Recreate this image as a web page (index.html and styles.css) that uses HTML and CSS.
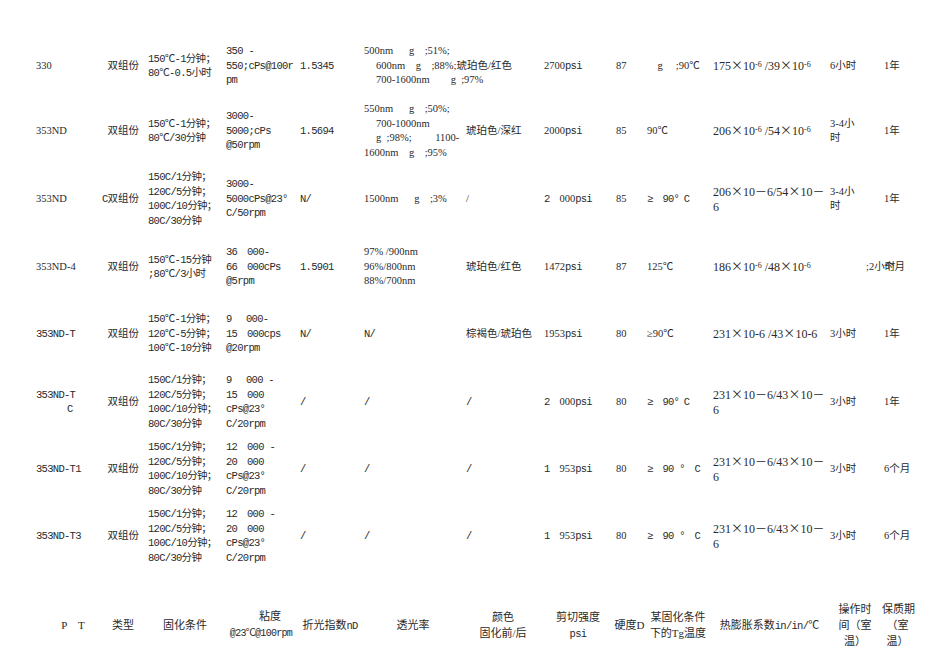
FILE: index.html
```html
<!DOCTYPE html>
<html lang="zh-CN">
<head>
<meta charset="utf-8">
<title>双组份胶粘剂参数表</title>
<link rel="stylesheet" href="styles.css">
</head>
<body>
<table class="sheet">
<colgroup>
<col class="w1"><col class="w2"><col class="w3"><col class="w4"><col class="w5"><col class="w6"><col class="w7"><col class="w8"><col class="w9"><col class="w10"><col class="w11"><col class="w12"><col class="w13">
</colgroup>
<tbody>
<tr class="r1">
<td>330</td>
<td class="ty">双组份</td>
<td class="m">150℃-1分钟；<br>80℃-0.5小时</td>
<td class="m">350 -<br>550;cPs@100r<br>pm</td>
<td class="m">1.5345</td>
<td>500nm　&ensp;g　;51%;<br><span class="ind">600nm　g　;88%;琥珀色/红色</span><br><span class="ind">700-1600nm　　g&ensp;;97%</span></td>
<td></td>
<td>2700<span class="m">psi</span></td>
<td>87</td>
<td>　g　 ;90℃</td>
<td class="tx">175<span class="x">×</span>10<sup class="sp">-6</sup> /39<span class="x">×</span>10<sup class="sp">-6</sup></td>
<td>6小时</td>
<td>1年</td>
</tr>
<tr class="r2">
<td>353ND</td>
<td class="ty">双组份</td>
<td class="m">150℃-1分钟；<br>80℃/30分钟</td>
<td class="m">3000-<br>5000;cPs<br>@50rpm</td>
<td class="m">1.5694</td>
<td>550nm　&ensp;g　;50%;<br><span class="ind">700-1000nm</span><br><span class="ind">g&ensp;;98%;　　 1100-</span><br>1600nm　g　;95%</td>
<td>琥珀色/深红</td>
<td>2000<span class="m">psi</span></td>
<td>85</td>
<td>90℃</td>
<td class="tx">206<span class="x">×</span>10<sup class="sp">-6</sup> /54<span class="x">×</span>10<sup class="sp">-6</sup></td>
<td>3-4小<br>时</td>
<td>1年</td>
</tr>
<tr class="r3">
<td>353ND</td>
<td class="ty"><span class="m">C</span>双组份</td>
<td class="m">150C/1分钟；<br>120C/5分钟；<br>100C/10分钟；<br>80C/30分钟</td>
<td class="m">3000-<br>5000cPs@23°<br>C/50rpm</td>
<td class="m">N/</td>
<td>1500nm　&ensp;g　;3%</td>
<td>/</td>
<td><span class="m">2　</span>000<span class="m">psi</span></td>
<td>85</td>
<td class="m">≥　90°&ensp;C</td>
<td class="tx">206<span class="x">×</span>10<span class="x">－</span>6/54<span class="x">×</span>10<span class="x">－</span><br>6</td>
<td>3-4小<br>时</td>
<td>1年</td>
</tr>
<tr class="r4">
<td>353ND-4</td>
<td class="ty">双组份</td>
<td class="m">150℃-15分钟<br>;80℃/3小时</td>
<td class="m">36　000-<br>66　000cPs<br>@5rpm</td>
<td class="m">1.5901</td>
<td>97% /900nm<br>96%/800nm<br>88%/700nm</td>
<td>琥珀色/红色</td>
<td>1472<span class="m">psi</span></td>
<td>87</td>
<td>125℃</td>
<td class="tx">186<span class="x">×</span>10<sup class="sp">-6</sup> /48<span class="x">×</span>10<sup class="sp">-6</sup></td>
<td class="late">;2小时</td>
<td>个月</td>
</tr>
<tr class="r5">
<td class="m">353ND-T</td>
<td class="ty">双组份</td>
<td class="m">150℃-1分钟；<br>120℃-5分钟；<br>100℃-10分钟</td>
<td class="m">9　&ensp;000-<br>15　000cps<br>@20rpm</td>
<td class="m">N/</td>
<td class="m">N/</td>
<td>棕褐色/琥珀色</td>
<td>1953<span class="m">psi</span></td>
<td>80</td>
<td>≥90℃</td>
<td class="tx">231<span class="x">×</span>10-6 /43<span class="x">×</span>10-6</td>
<td>3小时</td>
<td>1年</td>
</tr>
<tr class="r6">
<td class="m">353ND-T<br><span class="tail">C</span></td>
<td class="ty">双组份</td>
<td class="m">150C/1分钟；<br>120C/5分钟；<br>100C/10分钟；<br>80C/30分钟</td>
<td class="m">9　&ensp;000 -<br>15　000<br>cPs@23°<br>C/20rpm</td>
<td class="m">/</td>
<td class="m">/</td>
<td class="m">/</td>
<td><span class="m">2　</span>000<span class="m">psi</span></td>
<td>80</td>
<td class="m">≥　90°&ensp;C</td>
<td class="tx">231<span class="x">×</span>10<span class="x">－</span>6/43<span class="x">×</span>10<span class="x">－</span><br>6</td>
<td>3小时</td>
<td>1年</td>
</tr>
<tr class="r7">
<td class="m">353ND-T1</td>
<td class="ty">双组份</td>
<td class="m">150C/1分钟；<br>120C/5分钟；<br>100C/10分钟；<br>80C/30分钟</td>
<td class="m">12　000 -<br>20　000<br>cPs@23°<br>C/20rpm</td>
<td class="m">/</td>
<td class="m">/</td>
<td class="m">/</td>
<td><span class="m">1　</span>953<span class="m">psi</span></td>
<td>80</td>
<td class="m">≥　90 °　C</td>
<td class="tx">231<span class="x">×</span>10<span class="x">－</span>6/43<span class="x">×</span>10<span class="x">－</span><br>6</td>
<td>3小时</td>
<td>6个月</td>
</tr>
<tr class="r8">
<td class="m">353ND-T3</td>
<td class="ty">双组份</td>
<td class="m">150C/1分钟；<br>120C/5分钟；<br>100C/10分钟；<br>80C/30分钟</td>
<td class="m">12　000 -<br>20　000<br>cPs@23°<br>C/20rpm</td>
<td class="m">/</td>
<td class="m">/</td>
<td class="m">/</td>
<td><span class="m">1　</span>953<span class="m">psi</span></td>
<td>80</td>
<td class="m">≥　90 °　C</td>
<td class="tx">231<span class="x">×</span>10<span class="x">－</span>6/43<span class="x">×</span>10<span class="x">－</span><br>6</td>
<td>3小时</td>
<td>6个月</td>
</tr>
<tr class="hd">
<td class="h1">P　T</td>
<td>类型</td>
<td>固化条件</td>
<td><span class="visc">粘度</span><br><span class="m vs">@23℃@100rpm</span></td>
<td>折光指数<span class="m">nD</span></td>
<td>透光率</td>
<td>颜色<br>固化前/后</td>
<td>剪切强度<br><span class="m">psi</span></td>
<td>硬度D</td>
<td>某固化条件<br>下的Tg温度</td>
<td>热膨胀系数<span class="m">in/in/</span>℃</td>
<td>操作时<br>间（室<br>温）</td>
<td class="h13">保质期<br>（室<br>温）</td>
</tr>
</tbody>
</table>
</body>
</html>
```

FILE: styles.css
```css
html, body {
  margin: 0;
  padding: 0;
  background: #ffffff;
}

body {
  color: #2a2a2a;
  font-family: "Liberation Serif", "Noto Sans CJK SC", serif;
  font-size: 10.5px;
}

.sheet {
  table-layout: fixed;
  border-collapse: collapse;
  width: 901px;
  margin: 34px 0 0 34px;
}

.w1 { width: 66px; }
.w2 { width: 46px; }
.w3 { width: 78px; }
.w4 { width: 74px; }
.w5 { width: 64px; }
.w6 { width: 102px; }
.w7 { width: 78px; }
.w8 { width: 72px; }
.w9 { width: 31px; }
.w10 { width: 66px; }
.w11 { width: 117px; }
.w12 { width: 54px; }
.w13 { width: 53px; }

.sheet td {
  padding: 0 0 0 2px;
  vertical-align: middle;
  white-space: nowrap;
  line-height: 14.5px;
  text-align: left;
}

.r1 { height: 64px; }
.r2 { height: 66px; }
.r3 { height: 70px; }
.r4 { height: 66px; }
.r5 { height: 68px; }
.r6 { height: 68px; }
.r7 { height: 66px; }
.r8 { height: 68px; }
.hd { height: 110px; }

.m {
  font-family: "Liberation Mono", "Noto Sans CJK SC", monospace;
  font-size: 10.5px;
  letter-spacing: -0.7px;
}

.sheet td.ty {
  text-align: right;
  padding: 0 7px 0 0;
}

.ind {
  padding-left: 12px;
}

.x {
  font-family: "Noto Sans CJK SC", sans-serif;
}

.tx {
  font-size: 12px;
}

.sp {
  font-size: 8px;
  vertical-align: 3px;
  line-height: 0;
}

.tail {
  padding-left: 31px;
}

.sheet td.late {
  padding-left: 38px;
}

.hd td {
  font-size: 11px;
  line-height: 16px;
}

.sheet .hd td {
  text-align: center;
  padding: 0;
}

.sheet .hd td.h1 {
  padding-left: 12px;
}

.sheet .hd td.h13 {
  padding-right: 22px;
}

.vs {
  font-size: 10px;
}

.visc {
  padding-left: 18px;
}
```
